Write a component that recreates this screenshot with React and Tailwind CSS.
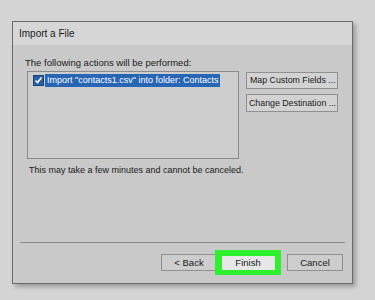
import React from "react";

export default function App() {
  const font = { fontFamily: '"Liberation Sans", Arial, sans-serif' };
  return (
    <div className="w-[375px] h-[300px] bg-[#d4d4d4] pt-[21px] pl-[12px] overflow-hidden" style={font}>
      <div className="w-[341px] h-[263px] border border-[#6a6a6a] bg-[#c9c9c9] flex flex-col shadow-[3px_3px_4px_rgba(0,0,0,0.25)]">
        <div className="h-[23px] bg-[#d6d6d6] flex items-center pl-[6px] text-[10px] text-[#1a1a1a]">Import a File</div>
        <div className="flex-1 flex flex-col">
          <div className="pl-[12px] pt-[11px] text-[9.5px] leading-[14px] text-[#1a1a1a]">The following actions will be performed:</div>
          <div className="flex pl-[14px] pt-[1px]">
            <div className="w-[212px] h-[88px] border border-[#8a8a8a] bg-[#cdcdcd] pt-[2px] pl-[5px]">
              <div className="flex items-center gap-[1px]">
                <div className="w-[11px] h-[11px] bg-[#2a5fa8] border border-[#1c3f78] flex items-center justify-center">
                  <svg width="9" height="9" viewBox="0 0 9 9"><path d="M1.5 4.5 L3.5 6.5 L7.5 1.5" stroke="#ffffff" strokeWidth="1.6" fill="none" /></svg>
                </div>
                <div className="bg-[#2766b5] text-white text-[9px] leading-[13px] px-[2px] whitespace-nowrap">Import "contacts1.csv" into folder: Contacts</div>
              </div>
            </div>
            <div className="flex flex-col gap-[5px] ml-[7px] pt-[1px]">
              <div className="w-[92px] h-[17px] border border-[#8f8f8f] bg-[#d2d2d2] text-[8.8px] leading-[15px] text-[#1a1a1a] pl-[3px] whitespace-nowrap">Map Custom Fields ...</div>
              <div className="w-[92px] h-[18px] border border-[#8f8f8f] bg-[#d2d2d2] text-[8.8px] leading-[16px] text-[#1a1a1a] pl-[2px] whitespace-nowrap">Change Destination ...</div>
            </div>
          </div>
          <div className="pl-[16px] pt-[4px] text-[9px] leading-[14px] text-[#1a1a1a]">This may take a few minutes and cannot be canceled.</div>
          <div className="flex-1" />
          <div className="mx-[7px] h-px bg-[#8a8a8a]" />
          <div className="flex items-center justify-end pr-[9px] pt-[7px] pb-[8px]">
            <div className="w-[56px] h-[17px] border border-[#8f8f8f] bg-[#cdcdcd] text-[9.5px] leading-[15px] text-[#1a1a1a] flex justify-center">&lt; Back</div>
            <div className="ml-[-2px] w-[66px] h-[25px] bg-[#2ef02e] flex items-center justify-center">
              <div className="w-[53px] h-[14px] bg-[#e6e6e6] text-[9.5px] leading-[14px] text-[#1a1a1a] flex justify-center">Finish</div>
            </div>
            <div className="ml-[6px] w-[56px] h-[17px] border border-[#8f8f8f] bg-[#cdcdcd] text-[9.5px] leading-[15px] text-[#1a1a1a] flex justify-center">Cancel</div>
          </div>
        </div>
      </div>
    </div>
  );
}
